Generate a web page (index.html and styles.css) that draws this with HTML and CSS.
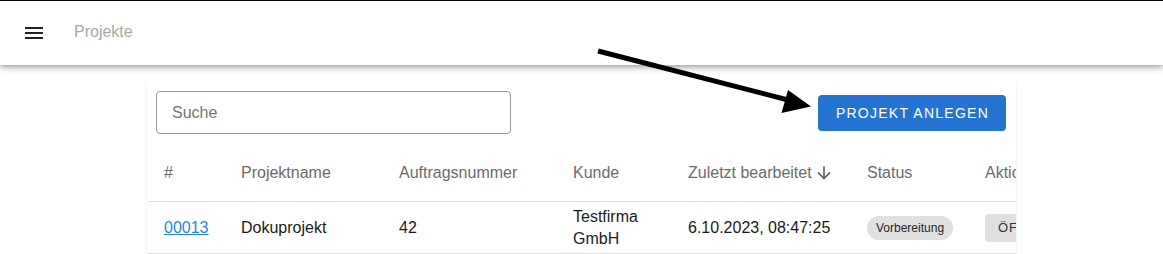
FILE: index.html
```html
<!DOCTYPE html>
<html lang="de">
<head>
<meta charset="utf-8">
<title>Projekte</title>
<link rel="stylesheet" href="styles.css">
</head>
<body>
<header class="appbar">
  <svg class="menu-icon" viewBox="0 0 24 24" width="24" height="24"><path d="M3 18h18v-2H3v2zm0-5h18v-2H3v2zm0-7v2h18V6H3z" fill="#212121"/></svg>
  <span class="appbar-title">Projekte</span>
</header>
<main class="main">
  <section class="card">
    <div class="toolbar">
      <div class="search">Suche</div>
      <button class="btn-primary">Projekt anlegen</button>
    </div>
    <div class="table-wrap">
      <table class="table">
        <colgroup>
          <col class="c1"><col class="c2"><col class="c3"><col class="c4"><col class="c5"><col class="c6"><col class="c7">
        </colgroup>
        <thead>
          <tr>
            <th>#</th>
            <th>Projektname</th>
            <th>Auftragsnummer</th>
            <th>Kunde</th>
            <th><span class="sort">Zuletzt bearbeitet<svg class="sort-icon" viewBox="0 0 24 24" width="20" height="20"><path d="M20 12l-1.41-1.41L13 16.17V4h-2v12.17l-5.58-5.59L4 12l8 8 8-8z" fill="#666"/></svg></span></th>
            <th>Status</th>
            <th>Aktionen</th>
          </tr>
        </thead>
        <tbody>
          <tr>
            <td><a class="link" href="#">00013</a></td>
            <td>Dokuprojekt</td>
            <td>42</td>
            <td>Testfirma<br>GmbH</td>
            <td>6.10.2023, 08:47:25</td>
            <td><span class="chip">Vorbereitung</span></td>
            <td><button class="btn-grey">Öffnen</button></td>
          </tr>
        </tbody>
      </table>
    </div>
  </section>
</main>
<svg class="annotation" viewBox="0 0 1163 254" width="1163" height="254">
  <line x1="598" y1="51" x2="792" y2="101" stroke="#000" stroke-width="5"/>
  <polygon points="788,90 811,106.5 781.5,113" fill="#000"/>
</svg>
</body>
</html>
```
FILE: styles.css
```css
* { box-sizing: border-box; }
html, body {
  margin: 0;
  padding: 0;
  background: #fff;
  font-family: "Liberation Sans", Arial, Helvetica, sans-serif;
  color: rgba(0,0,0,0.87);
}
.appbar {
  height: 65px;
  border-top: 1px solid #000;
  background: #fff;
  display: flex;
  align-items: center;
  padding-left: 22px;
  box-shadow: 0 2px 4px -1px rgba(0,0,0,.2), 0 4px 5px 0 rgba(0,0,0,.14), 0 1px 10px 0 rgba(0,0,0,.12);
  position: relative;
  z-index: 1;
}
.menu-icon { display: block; flex: none; }
.appbar-title {
  margin-left: 28px;
  font-size: 16px;
  color: #a8a8a8;
  margin-top: -2px;
}
.main {
  padding-top: 16px;
}
.card {
  width: 869px;
  margin: 0 auto;
  padding-bottom: 24px;
  background: #fff;
  border-radius: 2px;
  box-shadow: 0 2px 1px -1px rgba(0,0,0,.12), 0 1px 1px 0 rgba(0,0,0,.08), 0 1px 3px 0 rgba(0,0,0,.08);
  overflow: hidden;
}
.toolbar {
  display: flex;
  align-items: center;
  justify-content: space-between;
  padding: 10px 10px 10px 9px;
}
.search {
  width: 355px;
  height: 43px;
  border: 1px solid #9a9a9a;
  border-radius: 4px;
  padding: 0 15px;
  display: flex;
  align-items: center;
  font-size: 16px;
  color: #757575;
}
.btn-primary {
  height: 36px;
  border: none;
  border-radius: 4px;
  background: #2473d2;
  color: #fff;
  font-family: inherit;
  font-size: 14px;
  text-transform: uppercase;
  letter-spacing: 1.25px;
  padding: 0 17px 0 18px;
  margin-top: 1px;
  cursor: pointer;
}
.table-wrap {
  overflow: hidden;
  padding-left: 1px;
}
.table {
  border-collapse: collapse;
  table-layout: fixed;
  width: 1011px;
  font-size: 16px;
}
.c1 { width: 77px; }
.c2 { width: 158px; }
.c3 { width: 174px; }
.c4 { width: 115px; }
.c5 { width: 179px; }
.c6 { width: 118px; }
.c7 { width: 190px; }
.table th {
  height: 57px;
  padding: 1px 16px 0;
  text-align: left;
  font-weight: normal;
  color: #6b6b6b;
  line-height: 22px;
  border-bottom: 1px solid #e0e0e0;
  white-space: nowrap;
}
.table td {
  padding: 4px 16px 3px;
  line-height: 22px;
  color: #1a1a1a;
  border-bottom: 1px solid #e0e0e0;
  vertical-align: middle;
  white-space: nowrap;
}
.sort {
  display: inline-flex;
  align-items: center;
}
.sort-icon { margin-left: 2px; margin-top: 1px; }
.link {
  color: #1e88e5;
  text-decoration: underline;
}
.chip {
  display: inline-flex;
  align-items: center;
  height: 24px;
  padding: 0 9px;
  border-radius: 12px;
  background: #e0e0e0;
  font-size: 12px;
  color: #262626;
}
.btn-grey {
  height: 28px;
  border: none;
  border-radius: 4px;
  background: #e0e0e0;
  color: #333;
  font-family: inherit;
  font-size: 13px;
  text-transform: uppercase;
  letter-spacing: 1px;
  padding: 0 13px;
  display: block;
}
.annotation {
  position: absolute;
  top: 0;
  left: 0;
  pointer-events: none;
  z-index: 2;
}
```
